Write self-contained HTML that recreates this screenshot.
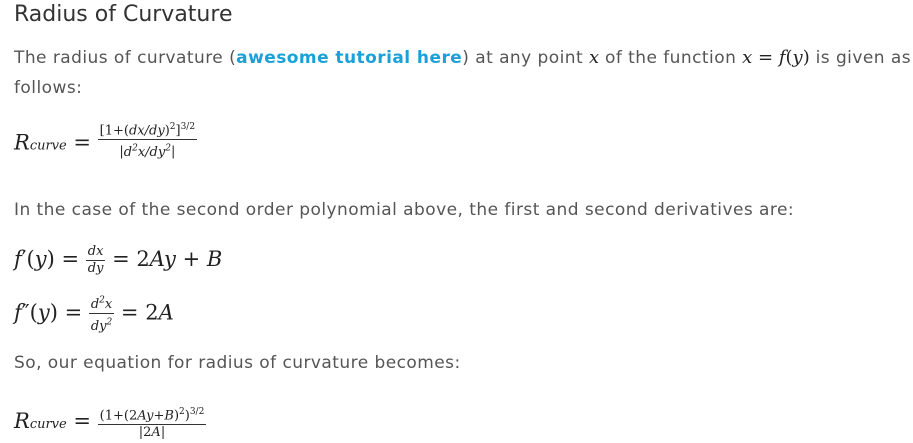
<!DOCTYPE html>
<html><head><meta charset="utf-8"><style>
body{margin:0;width:913px;height:443px;background:#fff;overflow:hidden;position:relative;font-family:"DejaVu Sans",sans-serif;color:#555}
.a{position:absolute;white-space:nowrap}
h2{position:absolute;left:14px;top:2px;margin:0;font-size:22px;font-weight:normal;color:#333}
.p{font-size:17px;letter-spacing:0.45px;left:14px}
a{color:#1ba1d8;font-weight:bold;text-decoration:none}
.m{font-family:"DejaVu Serif",serif;color:#222;font-size:21px;letter-spacing:0}
i{font-style:italic}
.fr{display:inline-block;vertical-align:middle;text-align:center;font-size:13px;line-height:14px}
.fr .n{border-bottom:1px solid #333;padding:0 2px 1px}
.fr .d{padding-top:1px}
sup{font-size:9px}
.s{font-size:13px;font-style:italic}
</style></head><body>
<h2>Radius of Curvature</h2>
<div class="a p" style="top:47px">The radius of curvature (<a>awesome tutorial here</a>) at any point <span class="m" style="font-size:18px"><i>x</i></span> of the function <span class="m" style="font-size:18px"><i>x</i> = <i>f</i>(<i>y</i>)</span> is given as</div>
<div class="a p" style="top:78px">follows:</div>
<div class="a m" style="left:14px;top:128px"><i>R</i><span class="s">curve</span> = <span class="fr" style="margin-top:-8px"><div class="n">[1+(<i>dx/dy</i>)<sup>2</sup>]<sup>3/2</sup></div><div class="d">|<i>d<sup>2</sup>x/dy<sup>2</sup></i>|</div></span></div>
<div class="a p" style="top:200px">In the case of the second order polynomial above, the first and second derivatives are:</div>
<div class="a m" style="left:14px;top:245px"><i>f</i>′(<i>y</i>) = <span class="fr"><div class="n"><i>dx</i></div><div class="d"><i>dy</i></div></span> = 2<i>Ay</i> + <i>B</i></div>
<div class="a m" style="left:14px;top:294px"><i>f</i>″(<i>y</i>) = <span class="fr"><div class="n"><i>d<sup>2</sup>x</i></div><div class="d"><i>dy<sup>2</sup></i></div></span> = 2<i>A</i></div>
<div class="a p" style="top:353px">So, our equation for radius of curvature becomes:</div>
<div class="a m" style="left:14px;top:405px"><i>R</i><span class="s">curve</span> = <span class="fr" style="font-size:13px"><div class="n">(1+(2<i>Ay</i>+<i>B</i>)<sup>2</sup>)<sup>3/2</sup></div><div class="d">|2<i>A</i>|</div></span></div>
</body></html>
